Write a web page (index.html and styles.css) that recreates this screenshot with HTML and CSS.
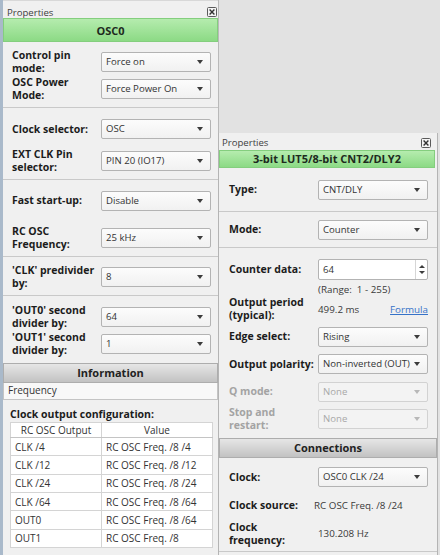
FILE: index.html
```html
<!DOCTYPE html>
<html>
<head>
<meta charset="utf-8">
<link rel="stylesheet" href="styles.css">
</head>
<body>
<div class="desk">
  <section class="panel panel-left">
    <header class="titlebar tb-left">
      <span class="title">Properties</span>
      <svg class="close" width="10" height="10" viewBox="0 0 10 10"><rect x="0.5" y="0.5" width="9" height="9" rx="1" fill="#f4f4f4" stroke="#5a5a5a"/><path d="M2.6 2.6L7.4 7.4M7.4 2.6L2.6 7.4" stroke="#333" stroke-width="1.4"/></svg>
    </header>
    <div class="banner banner-left">OSC0</div>

    <div class="group lg1">
      <div class="row h27"><div class="label">Control pin<br>mode:</div><div class="select"><span>Force on</span><i class="arrow"></i></div></div>
      <div class="row h27"><div class="label">OSC Power<br>Mode:</div><div class="select"><span>Force Power On</span><i class="arrow"></i></div></div>
    </div>
    <div class="group sep lg2">
      <div class="row h32"><div class="label">Clock selector:</div><div class="select"><span>OSC</span><i class="arrow"></i></div></div>
      <div class="row h32"><div class="label">EXT CLK Pin<br>selector:</div><div class="select"><span>PIN 20 (IO17)</span><i class="arrow"></i></div></div>
    </div>
    <div class="group sep lg3">
      <div class="row h37"><div class="label">Fast start-up:</div><div class="select"><span>Disable</span><i class="arrow"></i></div></div>
      <div class="row h37"><div class="label">RC OSC<br>Frequency:</div><div class="select"><span>25 kHz</span><i class="arrow"></i></div></div>
    </div>
    <div class="group sep lg4">
      <div class="row h27"><div class="label">'CLK' predivider<br>by:</div><div class="select"><span>8</span><i class="arrow"></i></div></div>
    </div>
    <div class="group sep lg5">
      <div class="row h27"><div class="label">'OUT0' second<br>divider by:</div><div class="select"><span>64</span><i class="arrow"></i></div></div>
      <div class="row h27"><div class="label">'OUT1' second<br>divider by:</div><div class="select"><span>1</span><i class="arrow"></i></div></div>
    </div>

    <div class="section-head">Information</div>
    <div class="tab">Frequency</div>
    <div class="caption">Clock output configuration:</div>
    <table class="grid">
      <thead><tr><th>RC OSC Output</th><th>Value</th></tr></thead>
      <tbody>
        <tr><td>CLK /4</td><td>RC OSC Freq. /8 /4</td></tr>
        <tr><td>CLK /12</td><td>RC OSC Freq. /8 /12</td></tr>
        <tr><td>CLK /24</td><td>RC OSC Freq. /8 /24</td></tr>
        <tr><td>CLK /64</td><td>RC OSC Freq. /8 /64</td></tr>
        <tr><td>OUT0</td><td>RC OSC Freq. /8 /64</td></tr>
        <tr><td>OUT1</td><td>RC OSC Freq. /8</td></tr>
      </tbody>
    </table>
  </section>

  <section class="panel panel-right">
    <header class="titlebar tb-right">
      <span class="title">Properties</span>
      <svg class="close" width="10" height="10" viewBox="0 0 10 10"><rect x="0.5" y="0.5" width="9" height="9" rx="1" fill="#f4f4f4" stroke="#5a5a5a"/><path d="M2.6 2.6L7.4 7.4M7.4 2.6L2.6 7.4" stroke="#333" stroke-width="1.4"/></svg>
    </header>
    <div class="banner banner-right">3-bit LUT5/8-bit CNT2/DLY2</div>

    <div class="group rg1">
      <div class="row h27"><div class="label">Type:</div><div class="select"><span>CNT/DLY</span><i class="arrow"></i></div></div>
    </div>
    <div class="group sep rg2">
      <div class="row h27"><div class="label">Mode:</div><div class="select"><span>Counter</span><i class="arrow"></i></div></div>
    </div>
    <div class="group sep rg3">
      <div class="row h27"><div class="label">Counter data:</div>
        <div class="spin"><span>64</span><div class="spin-btns"><i class="up"></i><i class="down"></i></div></div>
      </div>
      <div class="row hrange"><div class="label"></div><div class="value">(Range:&nbsp; 1 - 255)</div></div>
      <div class="row h275"><div class="label">Output period<br>(typical):</div><div class="value split"><span>499.2 ms</span><a class="link">Formula</a></div></div>
      <div class="row h275"><div class="label">Edge select:</div><div class="select"><span>Rising</span><i class="arrow"></i></div></div>
      <div class="row h275"><div class="label">Output polarity:</div><div class="select"><span>Non-inverted (OUT)</span><i class="arrow"></i></div></div>
      <div class="row h275 disabled"><div class="label">Q mode:</div><div class="select"><span>None</span><i class="arrow"></i></div></div>
      <div class="row h275 disabled"><div class="label">Stop and<br>restart:</div><div class="select"><span>None</span><i class="arrow"></i></div></div>
    </div>

    <div class="section-head">Connections</div>
    <div class="group rg4">
      <div class="row h28"><div class="label">Clock:</div><div class="select"><span>OSC0 CLK /24</span><i class="arrow"></i></div></div>
      <div class="row h29"><div class="label">Clock source:</div><div class="value shift">RC OSC Freq. /8 /24</div></div>
      <div class="row h27"><div class="label">Clock<br>frequency:</div><div class="value">130.208 Hz</div></div>
    </div>
  </section>
</div>
</body>
</html>
```

FILE: styles.css
```css
* { box-sizing: border-box; }
html, body { margin: 0; padding: 0; }
body {
  width: 440px;
  height: 555px;
  overflow: hidden;
  background: #e2e2e2;
  font-family: "Open Sans", "Noto Sans", sans-serif;
  font-size: 10px;
  color: #2a2a2a;
}
.desk { position: relative; width: 440px; height: 555px; }

.panel { background: #f0f0f0; }
.panel-left {
  width: 219px;
  height: 555px;
  border-left: 3px solid #a9b9ca;
  border-right: 1px solid #b9b9b9;
}
.panel-right {
  position: absolute;
  left: 218px;
  top: 133px;
  width: 220px;
  height: 422px;
  border-left: 1px solid #b4b4b4;
  border-right: 1px solid #b4b4b4;
}

.titlebar {
  display: flex;
  justify-content: space-between;
  align-items: center;
  color: #404040;
  font-size: 9.6px;
}
.tb-left { height: 18px; padding: 5px 1px 0 4px; border-top: 1px solid #d8d8d8; }
.tb-right { height: 17px; padding: 2px 6px 0 3px; }
.close { display: block; }

.banner {
  text-align: center;
  font-weight: bold;
  color: #1e2a1e;
  background: linear-gradient(#b5ecae, #8cda85);
  border: 1px solid #84ce7e;
}
.banner-left { height: 24px; line-height: 23px; font-size: 11px; }
.banner-right { height: 18px; line-height: 16px; font-size: 11px; margin-right: 2px; }

.sep { border-top: 1px solid #c9c9c9; }

.row {
  display: grid;
  grid-template-columns: 89px 110px;
  align-items: center;
}
.panel-left .row { padding-left: 9px; }
.panel-right .row { padding-left: 10px; }

.h27 { height: 27px; }
.h28 { height: 28px; }
.h29 { height: 29px; }
.h32 { height: 32px; }
.h37 { height: 37px; }
.h275 { height: 27.5px; }
.hrange { height: 12.5px; }

.lg1 { padding: 6px 0 5px; }
.lg2 { padding: 5px 0 2px; }
.lg3 { padding: 2px 0 0; }
.lg4 { padding: 6px 0 5px; }
.lg5 { padding: 7px 0 6px; }

.rg1 { padding: 8px 0 8px; }
.rg2 { padding: 4px 0 4px; }
.rg3 { padding: 8px 0 5px; }
.rg4 { padding: 5px 0 4px; border-bottom: 1px solid #c9c9c9; }

.label {
  font-weight: bold;
  font-size: 10.5px;
  line-height: 13px;
  color: #1c1c1c;
  white-space: nowrap;
}

.select {
  position: relative;
  height: 20px;
  border: 1px solid #b3b3b3;
  border-radius: 2px;
  background: linear-gradient(#fcfcfc, #f1f1f1);
  padding-left: 4px;
  line-height: 18px;
  font-size: 9.6px;
  color: #333;
  white-space: nowrap;
  overflow: hidden;
}
.arrow {
  position: absolute;
  right: 7px;
  top: 7px;
  width: 0;
  height: 0;
  border-left: 3.5px solid transparent;
  border-right: 3.5px solid transparent;
  border-top: 4px solid #3c3c3c;
}
.disabled .label { color: #a3a3a3; }
.disabled .select { color: #a8a8a8; border-color: #d2d2d2; background: #f3f3f3; }
.disabled .arrow { border-top-color: #b8b8b8; }

.spin {
  position: relative;
  height: 21px;
  border: 1px solid #b3b3b3;
  border-radius: 2px;
  background: #ffffff;
  padding-left: 4px;
  line-height: 19px;
  font-size: 9.6px;
  color: #333;
}
.spin-btns {
  position: absolute;
  right: 0;
  top: 0;
  bottom: 0;
  width: 12px;
  border-left: 1px solid #d6d6d6;
  display: flex;
  flex-direction: column;
  align-items: center;
  justify-content: space-around;
  padding: 3px 0;
}
.spin .up {
  width: 0; height: 0;
  border-left: 3px solid transparent;
  border-right: 3px solid transparent;
  border-bottom: 3px solid #3c3c3c;
}
.spin .down {
  width: 0; height: 0;
  border-left: 3px solid transparent;
  border-right: 3px solid transparent;
  border-top: 3px solid #3c3c3c;
}

.value { color: #3a3a3a; white-space: nowrap; line-height: 13px; font-size: 9.8px; }
.shift { margin-left: -4px; }
.split { display: flex; justify-content: space-between; align-items: center; }
.link { color: #3672c8; text-decoration: underline; }

.section-head {
  height: 20px;
  line-height: 18px;
  text-align: center;
  font-weight: bold;
  font-size: 11px;
  color: #222;
  background: linear-gradient(#e6e6e6, #c2c2c2);
  border: 1px solid #adadad;
}

.tab {
  height: 17px;
  line-height: 15px;
  padding-left: 4px;
  background: #f8f8f8;
  border: 1px solid #c4c4c4;
  border-top: none;
  color: #333;
}

.caption {
  margin: 8px 0 1px 7px;
  font-weight: bold;
  font-size: 10.5px;
  line-height: 13px;
  color: #1c1c1c;
}

.grid {
  margin-left: 7px;
  width: 203px;
  border-collapse: collapse;
  border: 1px solid #a8a8a8;
  background: #ffffff;
  table-layout: fixed;
}
.grid th, .grid td {
  border: 1px solid #d4d4d4;
  font-weight: normal;
  color: #333;
  white-space: nowrap;
  overflow: hidden;
  padding: 0 0 0 4px;
}
.grid th { height: 15px; text-align: center; padding: 0; line-height: 13px; border-bottom-color: #c4c4c4; }
.grid th:first-child, .grid td:first-child { width: 91px; }
.grid td { height: 18.33px; line-height: 16px; }
```
